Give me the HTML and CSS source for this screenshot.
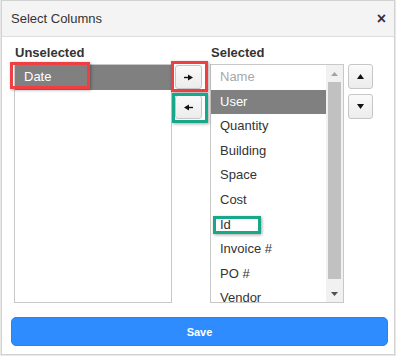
FILE: index.html
```html
<!DOCTYPE html>
<html>
<head>
<meta charset="utf-8">
<link rel="stylesheet" href="styles.css">
</head>
<body>
<div class="dialog">
  <div class="header">
    <span class="title">Select Columns</span>
    <span class="close">×</span>
  </div>
  <div class="content">
    <div class="cols">
      <div class="col col-left">
        <div class="label">Unselected</div>
        <div class="list">
          <div class="opts">
            <div class="opt sel">Date</div>
          </div>
        </div>
      </div>
      <div class="movers">
        <button class="btn mv"><svg width="9" height="7" viewBox="0 0 9 7"><path d="M0 3.5H5" stroke="#111" stroke-width="1.4"/><path d="M4 0.5L9 3.5L4 6.5Z" fill="#111"/></svg></button>
        <button class="btn mv"><svg width="9" height="7" viewBox="0 0 9 7"><path d="M4 3.5H9" stroke="#111" stroke-width="1.4"/><path d="M5 0.5L0 3.5L5 6.5Z" fill="#111"/></svg></button>
      </div>
      <div class="col col-right">
        <div class="label">Selected</div>
        <div class="list">
          <div class="opts">
            <div class="opt dis">Name</div>
            <div class="opt sel">User</div>
            <div class="opt">Quantity</div>
            <div class="opt">Building</div>
            <div class="opt">Space</div>
            <div class="opt">Cost</div>
            <div class="opt">Id</div>
            <div class="opt">Invoice #</div>
            <div class="opt">PO #</div>
            <div class="opt">Vendor</div>
          </div>
          <div class="scrollbar">
            <div class="sb-btn"><svg width="7" height="4" viewBox="0 0 7 4"><path d="M0 4L3.5 0L7 4Z" fill="#a3a3a3"/></svg></div>
            <div class="thumb"></div>
            <div class="sb-space"></div>
            <div class="sb-btn"><svg width="7" height="4" viewBox="0 0 7 4"><path d="M0 0L3.5 4L7 0Z" fill="#505050"/></svg></div>
          </div>
        </div>
      </div>
      <div class="orders">
        <button class="btn ord"><svg width="7" height="5" viewBox="0 0 7 5"><path d="M0 5L3.5 0L7 5Z" fill="#111"/></svg></button>
        <button class="btn ord"><svg width="7" height="5" viewBox="0 0 7 5"><path d="M0 0L3.5 5L7 0Z" fill="#111"/></svg></button>
      </div>
    </div>
    <button class="save">Save</button>
  </div>
</div>
<div class="mark red mark-date"></div>
<div class="mark red mark-right"></div>
<div class="mark teal mark-left"></div>
<div class="mark teal mark-id"></div>
</body>
</html>
```
FILE: styles.css
```css
html, body {
  margin: 0;
  padding: 0;
}
body {
  width: 396px;
  height: 356px;
  position: relative;
  overflow: hidden;
  background: #e8e8e8;
  font-family: "Liberation Sans", Arial, sans-serif;
  color: #333;
}
.dialog {
  box-sizing: border-box;
  margin-left: 1px;
  width: 394px;
  height: 355px;
  border: 1px solid #d2d2d2;
  background: #fff;
  display: flex;
  flex-direction: column;
}
.header {
  height: 35px;
  border-bottom: 1px solid #dedede;
  background: #f4f4f4;
  display: flex;
  align-items: center;
  justify-content: space-between;
  padding: 0 8px 0 9px;
}
.title {
  font-size: 13px;
  color: #333;
}
.close {
  font-size: 16px;
  font-weight: bold;
  color: #333;
  line-height: 16px;
}
.content {
  padding: 8px 6px 0 9px;
}
.cols {
  display: flex;
  margin-left: 3px;
}
.label {
  font-size: 13px;
  font-weight: bold;
  line-height: 16px;
  color: #333;
  padding-left: 1px;
  margin-bottom: 3px;
}
.col-left { width: 158px; }
.col-right { width: 134px; }
.list {
  box-sizing: border-box;
  height: 239px;
  border: 1px solid #c8c8c8;
  display: flex;
  overflow: hidden;
}
.opts {
  flex: 1;
  overflow: hidden;
}
.opt {
  height: 24.6px;
  line-height: 24.6px;
  font-size: 13px;
  padding-left: 9px;
  color: #333;
  white-space: nowrap;
}
.opt.sel {
  background: #808080;
  color: #fff;
}
.opt.dis {
  color: #a8a8a8;
}
.scrollbar {
  width: 17px;
  background: #f1f1f1;
  display: flex;
  flex-direction: column;
}
.sb-btn {
  height: 17px;
  display: flex;
  align-items: center;
  justify-content: center;
}
.thumb {
  height: 197px;
  margin: 0 2px;
  background: #c1c1c1;
}
.sb-space { flex: 1; }
.movers {
  width: 38px;
  box-sizing: border-box;
  padding: 20px 0 0 3px;
  display: flex;
  flex-direction: column;
  gap: 6px;
}
.btn {
  box-sizing: border-box;
  margin: 0;
  padding: 0;
  border: 1px solid #c6c6c6;
  border-radius: 3px;
  background: linear-gradient(#fafafa, #ececec);
  display: flex;
  align-items: center;
  justify-content: center;
}
.mv {
  width: 27px;
  height: 24px;
}
.orders {
  margin-left: 4px;
  padding-top: 19px;
  display: flex;
  flex-direction: column;
  gap: 5px;
}
.ord {
  width: 25px;
  height: 25px;
}
.save {
  display: block;
  box-sizing: border-box;
  width: 100%;
  height: 29px;
  margin-top: 14px;
  border: 1px solid #2a84f0;
  border-radius: 5px;
  background: #2e8cff;
  color: #fff;
  font-family: "Liberation Sans", Arial, sans-serif;
  font-size: 11px;
  font-weight: bold;
}
.mark {
  position: absolute;
  box-sizing: border-box;
  border: 3px solid;
  box-shadow: 1px 1px 3px rgba(0, 0, 0, 0.35);
}
.red { border-color: #ef3f43; }
.teal { border-color: #17a78a; }
.mark-date { left: 10px; top: 62px; width: 80px; height: 27px; }
.mark-right { left: 171px; top: 61px; width: 37px; height: 31px; }
.mark-left { left: 172px; top: 93px; width: 36px; height: 30px; }
.mark-id { left: 213px; top: 216px; width: 48px; height: 18px; }
```
